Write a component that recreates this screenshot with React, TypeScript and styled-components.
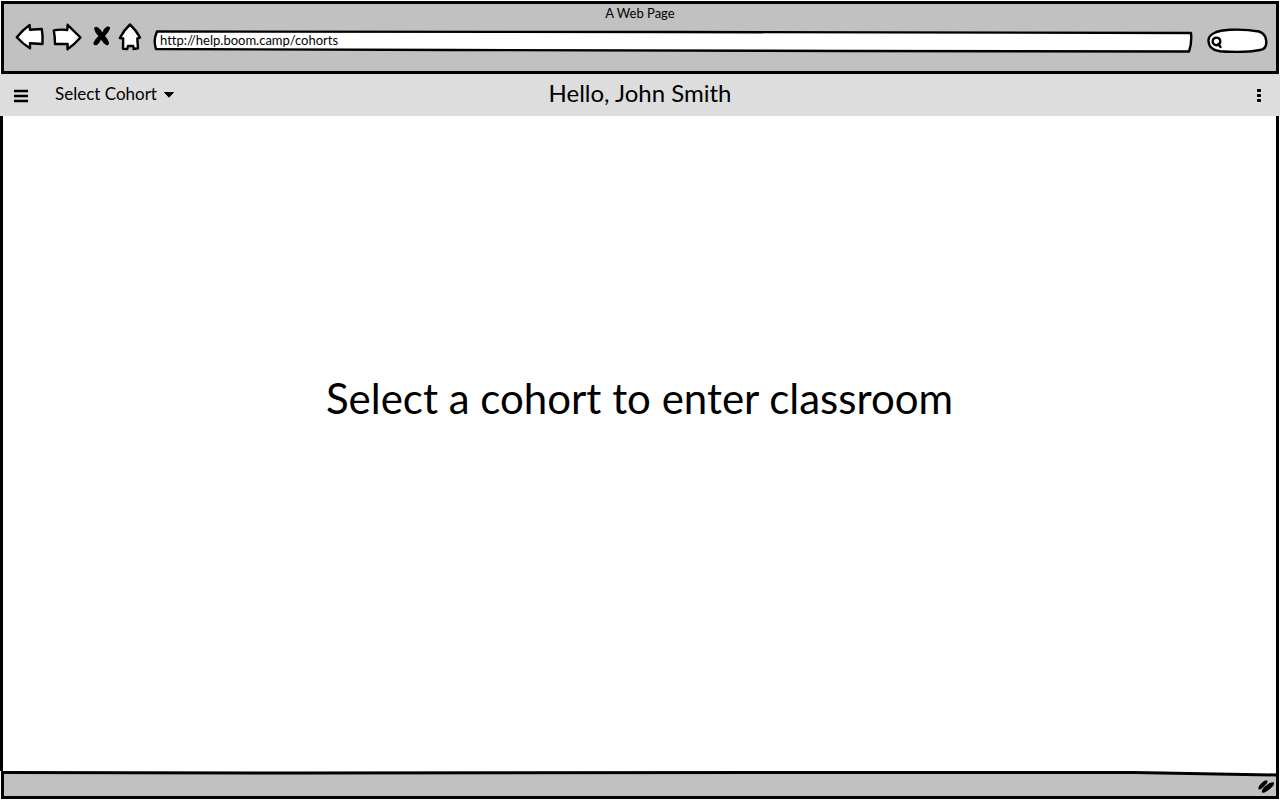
import React from "react";
import styled, { createGlobalStyle } from "styled-components";

const GlobalStyle = createGlobalStyle`
  *, *::before, *::after { box-sizing: border-box; }
  body {
    margin: 0;
    background: #fff;
    color: #000;
    font-family: Lato, "Liberation Sans", sans-serif;
    font-variant-ligatures: none;
  }
  button, input, select { font: inherit; color: inherit; font-variant-ligatures: none; }
`;

const Window = styled.div`
  display: flex;
  flex-direction: column;
  min-height: 100vh;
  padding: 1px 0;
`;

const Chrome = styled.header`
  display: flex;
  flex-direction: column;
  gap: 1px;
  height: 73px;
  margin: 0 1px;
  border: 3px solid #000;
  background: #c1c1c1;
`;

const PageTitle = styled.div`
  line-height: 18px;
  font-size: 13px;
  text-align: center;
`;

const Toolbar = styled.div`
  display: flex;
  align-items: center;
  height: 30px;
  padding: 0 8px 0 10px;
`;

const IconButton = styled.button<{ $width: number; $gap?: number }>`
  flex: none;
  width: ${(p) => p.$width}px;
  height: 30px;
  margin: 0 ${(p) => p.$gap ?? 0}px 0 0;
  padding: 0;
  border: 0;
  background: none;
  cursor: pointer;
`;

const Sketch = styled.svg<{ $solid?: boolean }>`
  display: block;
  width: 100%;
  height: 100%;
  fill: ${(p) => (p.$solid ? "#000" : "#fff")};
  stroke: ${(p) => (p.$solid ? "none" : "#000")};
  stroke-width: 2.4;
  stroke-linejoin: round;
  stroke-linecap: round;
`;

const Glyph = styled.svg`
  display: block;
  width: 16px;
  height: 16px;
`;

const Address = styled.label`
  position: relative;
  flex: 1;
  height: 30px;
`;

const Search = styled.label`
  position: relative;
  flex: none;
  width: 62px;
  height: 30px;
  margin-left: 13px;
`;

const Outline = styled(Sketch)`
  position: absolute;
  inset: 0;
`;

const Field = styled.input<{ $indent: number }>`
  position: relative;
  display: block;
  width: 100%;
  height: 34px;
  padding: 0 8px 0 ${(p) => p.$indent}px;
  border: 0;
  outline: 0;
  background: none;
  font-size: 13px;
`;

const AppBar = styled.nav`
  display: grid;
  grid-template-columns: 1fr auto 1fr;
  align-items: center;
  height: 42px;
  padding: 0 13px;
  background: #ddd;
`;

const Start = styled.div`
  display: flex;
  align-items: center;
  gap: 26px;
`;

const End = styled.div`
  display: flex;
  justify-content: flex-end;
`;

const Greeting = styled.h1`
  margin: 0;
  padding-bottom: 4px;
  font-size: 24px;
  line-height: 38px;
  font-weight: 400;
`;

const CohortPicker = styled.label`
  position: relative;
  display: flex;
  align-items: center;
  height: 38px;
`;

const CohortSelect = styled.select`
  width: 124px;
  height: 36px;
  padding: 0 0 4px;
  border: 0;
  outline: 0;
  appearance: none;
  background: none;
  font-size: 17px;
`;

const Caret = styled.svg`
  position: absolute;
  right: 5px;
  width: 10px;
  height: 6px;
  pointer-events: none;
`;

const Content = styled.main`
  display: flex;
  flex: 1;
  align-items: center;
  justify-content: center;
  margin-right: 1px;
  padding-bottom: 92px;
  border: solid #000;
  border-width: 0 3px;
`;

const Prompt = styled.h2`
  margin: 0;
  font-size: 42px;
  line-height: 48px;
  font-weight: 400;
`;

const StatusBar = styled.footer`
  position: relative;
  display: flex;
  align-items: center;
  justify-content: flex-end;
  height: 28px;
  margin: 0 1px;
  padding: 4px 0 0;
  border: solid #000;
  border-width: 0 3px 3px;
`;

const Slope = styled(Outline)`
  fill: #c1c1c1;
  stroke-width: 3;
`;

const Grip = styled.svg`
  position: relative;
  width: 18px;
  height: 16px;
`;

export default function App() {
  return (
    <Window>
      <GlobalStyle />
      <Chrome>
        <PageTitle>A Web Page</PageTitle>
        <Toolbar>
          <IconButton $width={31} $gap={6} aria-label="Back">
            <Sketch viewBox="14 23 31 30">
              <path d="M16.8 37.2Q22.5 30 29.6 25L30 29.8L41.8 29Q43 36 42.5 44L30 43.3L30 48.2Q23 44 16.8 37.2Z" />
            </Sketch>
          </IconButton>
          <IconButton $width={33} $gap={7} aria-label="Forward">
            <Sketch viewBox="51 23 33 30">
              <path d="M53.8 30.4Q60 29 67.3 30L67.6 24.8Q74 31 80.5 37.5Q75 44 67.5 49.2L67.6 44L55 44Q55 37 53.8 30.4Z" />
            </Sketch>
          </IconButton>
          <IconButton $width={20} $gap={7} aria-label="Stop">
            <Sketch $solid viewBox="91 23 20 30">
              <path d="M94 28.5Q95 25.5 98 27.5Q100.500 29 102.3 32.5Q104 28 107 26.5Q110.5 26 110 28.5Q109 32 105 36Q107.500 38.500 109 42.5Q109 46 106 45Q103 43 101 39.8Q99.5 43 97 45Q93 46 93.500 42.5Q95 39 98.500 36Q95 33 94 28.5Z" />
            </Sketch>
          </IconButton>
          <IconButton $width={25} $gap={10} aria-label="Home">
            <Sketch viewBox="118 23 25 30">
              <path d="M130 24.5Q136 30 140 37.5L137.3 38.5L138 48.3L133.6 49L133.2 46L128 46L127.3 49L123 48.7L123.2 38.5L119.8 38Q124 30 130 24.5Z" />
            </Sketch>
          </IconButton>
          <Address aria-label="Address">
            <Outline viewBox="0 0 1042 30" preserveAspectRatio="none">
              <path d="M4 8.5L520 9L1040 10Q1041 20 1038 28.5L700 28L300 27L3 26Q0 17 4 8.5Z" />
            </Outline>
            <Field $indent={7} defaultValue="http://help.boom.camp/cohorts" />
          </Address>
          <Search aria-label="Search">
            <Outline viewBox="1206 23 62 30">
              <path d="M1208.5 41C1208 34 1217 30.5 1230 29.8Q1245 29 1259 31.5Q1266 34 1266.2 41Q1267 49 1260 50Q1245 53 1220 51.2Q1209 50 1208.5 41Z" />
              <path d="M1218.3 44L1220.5 47M1220.300 41.4a3.800 3.800 0 1 1-7.600 0a3.800 3.800 0 1 1 7.600 0" />
            </Outline>
            <Field $indent={18} />
          </Search>
        </Toolbar>
      </Chrome>
      <AppBar>
        <Start>
          <IconButton $width={16} aria-label="Menu">
            <Glyph viewBox="0 0 16 16">
              <path d="M1 4h14M1 9h14M1 14h14" stroke="#000" strokeWidth="2.4" />
            </Glyph>
          </IconButton>
          <CohortPicker aria-label="Cohort">
            <CohortSelect>
              <option>Select Cohort</option>
            </CohortSelect>
            <Caret viewBox="0 0 10 6">
              <path d="M.5 .5h9L5 5.2z" stroke="#000" strokeLinejoin="round" />
            </Caret>
          </CohortPicker>
        </Start>
        <Greeting>Hello, John Smith</Greeting>
        <End>
          <IconButton $width={16} aria-label="More options">
            <Glyph viewBox="0 0 16 16">
              <path d="M6.500 2h3l.5 .5v2l-.5 .5h-3l-.5-.5v-2zM6.500 7h3l.5 .5v2l-.5 .5h-3l-.5-.5v-2zM6.500 12h3l.5 .5v2l-.5 .5h-3l-.5-.5v-2z" />
            </Glyph>
          </IconButton>
        </End>
      </AppBar>
      <Content>
        <Prompt>Select a cohort to enter classroom</Prompt>
      </Content>
      <StatusBar>
        <Slope viewBox="0 0 1272 25" preserveAspectRatio="none">
          <path d="M-2 1.5L300 2L900 1.5L1130 1.5L1274 4V30H-2Z" />
        </Slope>
        <Grip viewBox="1258 779 18 16">
          <path d="M1258.5 790.5Q1257.500 788 1261 784.500Q1265 780.500 1267.300 781.500Q1268.500 783 1265 786.500Q1261 791 1258.500 790.500ZM1262 793.500Q1261 791 1265.500 787Q1271 782.500 1273.800 783.500Q1275 785.500 1270.500 789.500Q1265 794.500 1262 793.500Z" />
        </Grip>
      </StatusBar>
    </Window>
  );
}
